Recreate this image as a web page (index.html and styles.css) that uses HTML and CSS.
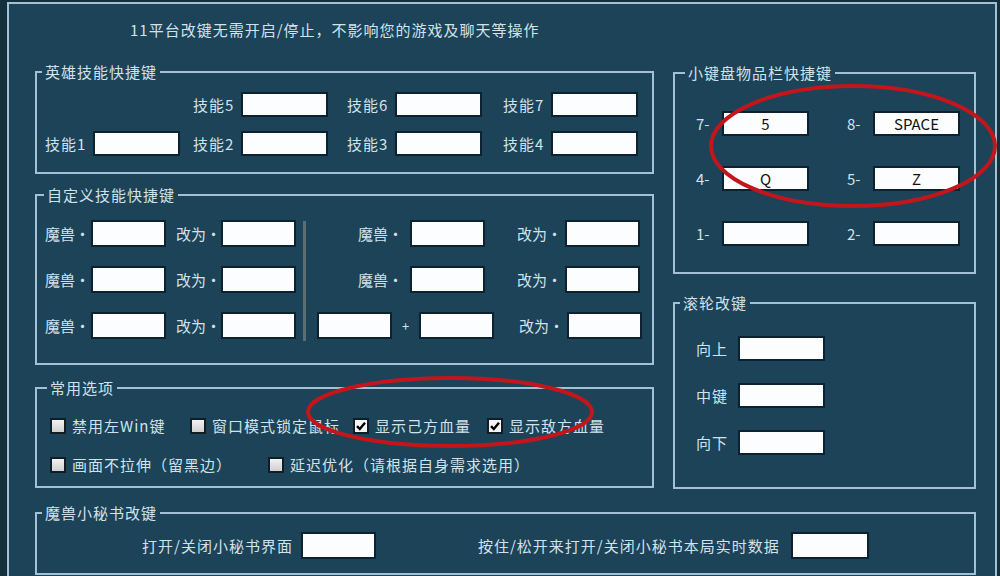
FILE: index.html
```html
<!DOCTYPE html>
<html lang="zh-CN">
<head>
    <meta charset="UTF-8">
    <title>11平台改键</title>
    <link rel="stylesheet" href="styles.css">
</head>
<body>
    <div class="window">
        <p class="title">11平台改键无需开启/停止，不影响您的游戏及聊天等操作</p>

        <div class="main">
            <div class="col-left">
                <fieldset class="hero">
                    <legend>英雄技能快捷键</legend>
                    <div class="hero-grid">
                        <div class="cell"></div>
                        <div class="cell"><span class="lbl">技能5</span><input class="key" type="text"></div>
                        <div class="cell"><span class="lbl">技能6</span><input class="key" type="text"></div>
                        <div class="cell"><span class="lbl">技能7</span><input class="key" type="text"></div>
                        <div class="cell"><span class="lbl">技能1</span><input class="key" type="text"></div>
                        <div class="cell"><span class="lbl">技能2</span><input class="key" type="text"></div>
                        <div class="cell"><span class="lbl">技能3</span><input class="key" type="text"></div>
                        <div class="cell"><span class="lbl">技能4</span><input class="key" type="text"></div>
                    </div>
                </fieldset>

                <fieldset class="custom">
                    <legend>自定义技能快捷键</legend>
                    <div class="custom-body">
                        <div class="block">
                            <div class="crow"><span class="lbl-a">魔兽·</span><input class="key sm" type="text"><span class="lbl-b">改为·</span><input class="key sm" type="text"></div>
                            <div class="crow"><span class="lbl-a">魔兽·</span><input class="key sm" type="text"><span class="lbl-b">改为·</span><input class="key sm" type="text"></div>
                            <div class="crow"><span class="lbl-a">魔兽·</span><input class="key sm" type="text"><span class="lbl-b">改为·</span><input class="key sm" type="text"></div>
                        </div>
                        <div class="sep"></div>
                        <div class="block">
                            <div class="crow"><span class="lbl-r">魔兽·</span><input class="key sm" type="text"><span class="lbl-c">改为·</span><input class="key sm" type="text"></div>
                            <div class="crow"><span class="lbl-r">魔兽·</span><input class="key sm" type="text"><span class="lbl-c">改为·</span><input class="key sm" type="text"></div>
                            <div class="crow"><input class="key sm" type="text"><span class="plus">+</span><input class="key sm" type="text"><span class="lbl-c">改为·</span><input class="key sm" type="text"></div>
                        </div>
                    </div>
                </fieldset>

                <fieldset class="options">
                    <legend>常用选项</legend>
                    <div class="opt-body">
                        <div class="opt-row first">
                            <label class="opt"><span class="cb"></span>禁用左Win键</label>
                            <label class="opt"><span class="cb"></span>窗口模式锁定鼠标</label>
                            <label class="opt"><span class="cb on"><svg viewBox="0 0 12 12"><path d="M2 6.2 L4.8 9 L10 2.8" /></svg></span>显示己方血量</label>
                            <label class="opt"><span class="cb on"><svg viewBox="0 0 12 12"><path d="M2 6.2 L4.8 9 L10 2.8" /></svg></span>显示敌方血量</label>
                        </div>
                        <div class="opt-row second">
                            <label class="opt"><span class="cb"></span>画面不拉伸（留黑边）</label>
                            <label class="opt"><span class="cb"></span>延迟优化（请根据自身需求选用）</label>
                        </div>
                    </div>
                </fieldset>
            </div>

            <div class="col-right">
                <fieldset class="numpad">
                    <legend>小键盘物品栏快捷键</legend>
                    <div class="pad-grid">
                        <div class="cell"><span class="num">7-</span><input class="key" type="text" value="5"></div>
                        <div class="cell"><span class="num">8-</span><input class="key" type="text" value="SPACE"></div>
                        <div class="cell"><span class="num">4-</span><input class="key" type="text" value="Q"></div>
                        <div class="cell"><span class="num">5-</span><input class="key" type="text" value="Z"></div>
                        <div class="cell"><span class="num">1-</span><input class="key" type="text"></div>
                        <div class="cell"><span class="num">2-</span><input class="key" type="text"></div>
                    </div>
                </fieldset>

                <fieldset class="wheel">
                    <legend>滚轮改键</legend>
                    <div class="wheel-list">
                        <div class="cell"><span class="wlbl">向上</span><input class="key" type="text"></div>
                        <div class="cell"><span class="wlbl">中键</span><input class="key" type="text"></div>
                        <div class="cell"><span class="wlbl">向下</span><input class="key" type="text"></div>
                    </div>
                </fieldset>
            </div>
        </div>

        <fieldset class="helper">
            <legend>魔兽小秘书改键</legend>
            <div class="helper-row">
                <span>打开/关闭小秘书界面</span><input class="key sm" type="text">
                <span class="far">按住/松开来打开/关闭小秘书本局实时数据</span><input class="key wide" type="text">
            </div>
        </fieldset>
    </div>

    <!-- red annotation marks drawn over the window -->
    <svg class="marks" viewBox="0 0 1000 576">
        <ellipse cx="853" cy="146" rx="142" ry="60" />
        <ellipse cx="450" cy="412" rx="142" ry="34" />
    </svg>
</body>
</html>
```

FILE: styles.css
```css
body {
    margin: 0;
    height: 576px;
    overflow: hidden;
    position: relative;
    background-color: #15303d;
    font-family: "Noto Sans CJK SC", "Noto Sans", sans-serif;
    font-size: 15px;
    letter-spacing: 1px;
    color: #d2e2eb;
}

.window {
    box-sizing: border-box;
    margin: 2px 3px 0 7px;
    height: 574px;
    overflow: hidden;
    padding: 16px 19px 0 26px;
    background-color: #1c4357;
    border: 2px solid #a2c1d4;
    border-bottom: none;
}

.title {
    margin: 0 0 0 95px;
    line-height: 20px;
}

.main {
    display: flex;
    gap: 19px;
    margin-top: 22px;
}

.col-left {
    width: 619px;
}

.col-right {
    width: 303px;
    margin-top: 1px;
}

/* fieldsets keep zero padding so the legend sits at the same offset; inner blocks carry the padding */
fieldset {
    margin: 0;
    padding: 0;
    min-width: 0;
    border: 2px solid #a2c1d4;
}

legend {
    margin-left: 5px;
    padding: 0 3px;
    line-height: 20px;
}

.key {
    box-sizing: border-box;
    width: 87px;
    height: 25px;
    padding: 0;
    margin: 0;
    border: 2px solid #0c2230;
    background-color: #fbfdfe;
    font-family: "Noto Sans CJK SC", "Noto Sans", sans-serif;
    font-size: 15px;
    letter-spacing: 0;
    color: #111;
    text-align: center;
}

.key.sm {
    width: 75px;
    height: 27px;
}

.key.wide {
    width: 78px;
    height: 27px;
}

.cell {
    display: flex;
    align-items: center;
}

/* hero skills */
.hero-grid {
    display: grid;
    grid-template-columns: 148px 154px 156px 1fr;
    row-gap: 14px;
    padding: 10px 0 16px 8px;
}

.hero-grid .cell {
    height: 25px;
}

.hero .lbl {
    width: 48px;
}

/* custom keys */
.custom {
    margin-top: 11px;
}

.custom legend {
    margin-left: 7px;
}

.custom-body {
    display: flex;
    padding: 15px 0 24px 8px;
}

.block {
    display: flex;
    flex-direction: column;
    gap: 19px;
}

.crow {
    display: flex;
    align-items: center;
    height: 27px;
    white-space: nowrap;
    letter-spacing: 0;
}

.lbl-a {
    width: 46px;
}

.lbl-b {
    width: 45px;
    margin-left: 10px;
}

.lbl-r {
    width: 86px;
    margin-right: 7px;
    text-align: right;
}

.lbl-c {
    width: 48px;
    margin-left: 32px;
}

.crow .plus {
    width: 27px;
    text-align: center;
    font-size: 13px;
}

.crow .plus + .key + .lbl-c {
    margin-left: 25px;
}

.sep {
    width: 3px;
    margin: 1px 11px -2px 7px;
    background-color: #5c6d74;
}

/* options */
.options {
    margin-top: 13px;
}

.options legend {
    margin-left: 10px;
}

.opt-body {
    padding: 17px 0 12px 13px;
}

.opt-row {
    display: grid;
    height: 20px;
    align-items: center;
}

.opt-row.first {
    grid-template-columns: 140px 163px 134px auto;
}

.opt-row.second {
    margin-top: 19px;
    grid-template-columns: 218px auto;
}

.opt {
    display: flex;
    align-items: center;
    white-space: nowrap;
}

.cb {
    box-sizing: border-box;
    width: 16px;
    height: 16px;
    margin-right: 6px;
    border: 2px solid #111d24;
    background: linear-gradient(#f2f2f2, #cfcfcf);
    display: flex;
}

.cb.on {
    background: #f4f4f4;
}

.cb svg {
    width: 12px;
    height: 12px;
}

.cb path {
    fill: none;
    stroke: #000;
    stroke-width: 2.4;
}

/* numpad */
.numpad legend {
    margin-left: 10px;
}

.pad-grid {
    display: grid;
    grid-template-columns: 113px 1fr;
    column-gap: 38px;
    row-gap: 30px;
    padding: 28px 0 26px 21px;
}

.num {
    width: 26px;
    letter-spacing: 0;
}

/* wheel */
.wheel {
    margin-top: 19px;
}

.wheel-list {
    display: flex;
    flex-direction: column;
    gap: 22px;
    padding: 23px 0 32px 21px;
}

.wlbl {
    width: 42px;
}

/* helper */
.helper {
    margin-top: 14px;
}

.helper-row {
    display: flex;
    align-items: center;
    padding: 9px 0 14px 105px;
}

.helper-row .key {
    margin-left: 8px;
}

.helper-row .far {
    margin-left: 102px;
}

.helper-row .key.wide {
    margin-left: 11px;
}

.marks {
    position: absolute;
    left: 0;
    top: 0;
    width: 1000px;
    height: 576px;
    pointer-events: none;
}

.marks ellipse {
    fill: none;
    stroke: #c3161c;
    stroke-width: 4;
}
```
